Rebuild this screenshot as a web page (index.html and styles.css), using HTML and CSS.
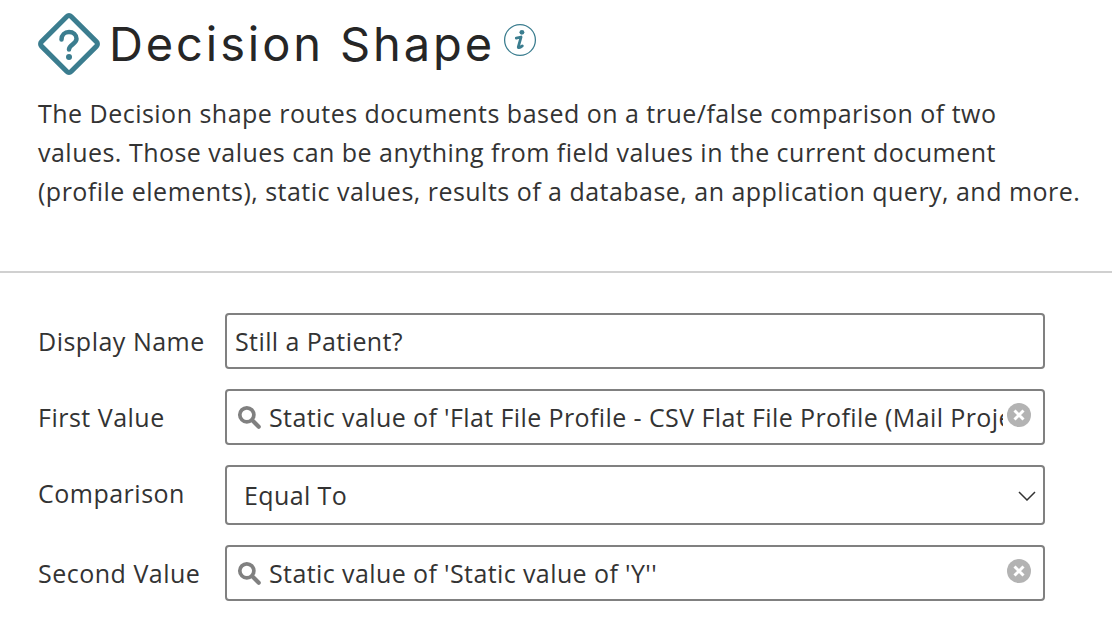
FILE: index.html
```html
<!DOCTYPE html>
<html lang="en">

<head>
    <meta charset="UTF-8">
    <meta name="viewport" content="width=device-width, initial-scale=1.0">
    <title>Decision Shape</title>
    <link rel="stylesheet" href="styles.css">
</head>

<body>
    <header class="intro">
        <div class="title-row">
            <svg class="shape-icon" width="64" height="64" viewBox="0 0 64 64" fill="none">
                <rect x="11" y="11" width="42" height="42" rx="3" transform="rotate(45 32 32)" stroke="#3b7d8f" stroke-width="5"/>
                <path d="M24.500 27.500c0-4.500 3.300-7.500 7.500-7.500s7.500 2.800 7.500 6.800c0 5.500-7.500 5.500-7.500 10.700" stroke="#3b7d8f" stroke-width="4.500" stroke-linecap="round"/>
                <circle cx="32" cy="45" r="3" fill="#3b7d8f"/>
            </svg>
            <h1>Decision Shape</h1>
            <svg class="info-icon" width="34" height="34" viewBox="0 0 32 32" fill="none">
                <circle cx="16" cy="16" r="14.500" stroke="#3b7d8f" stroke-width="1.200"/>
                <circle cx="17.800" cy="8.800" r="2.300" fill="#3b7d8f"/>
                <path d="M12.500 14.200l4.500-1-2.600 9.200c-.3 1.200 1 1.300 3.800-.9" stroke="#3b7d8f" stroke-width="2.600" stroke-linecap="round" stroke-linejoin="round"/>
            </svg>
        </div>
        <p class="summary">The Decision shape routes documents based on a true/false comparison of two values. Those values can be anything from field values in the current document (profile elements), static values, results of a database, an application query, and more.</p>
    </header>

    <form class="fields">
        <div class="field-row">
            <label>Display Name</label>
            <div class="box">
                <span class="box-text">Still a Patient?</span>
            </div>
        </div>
        <div class="field-row">
            <label>First Value</label>
            <div class="box">
                <svg class="search-icon" width="26" height="26" viewBox="0 0 24 24" fill="none">
                    <circle cx="10" cy="10" r="6.500" stroke="#808080" stroke-width="3.400"/>
                    <path d="M15 15l6 6" stroke="#808080" stroke-width="3.800" stroke-linecap="round"/>
                </svg>
                <span class="box-text">Static value of 'Flat File Profile - CSV Flat File Profile (Mail Project)'</span>
                <svg class="clear-icon" width="24" height="24" viewBox="0 0 24 24" fill="none">
                    <circle cx="12" cy="12" r="12" fill="#b3b3b3"/>
                    <path d="M7.500 7.500l9 9M16.500 7.500l-9 9" stroke="#fff" stroke-width="3"/>
                </svg>
            </div>
        </div>
        <div class="field-row select-row">
            <label>Comparison</label>
            <div class="box select-box">
                <span class="box-text">Equal To</span>
                <svg class="chevron" width="18" height="10" viewBox="0 0 18 10" fill="none">
                    <path d="M1 1l8 8 8-8" stroke="#333" stroke-width="1.500"/>
                </svg>
            </div>
        </div>
        <div class="field-row">
            <label>Second Value</label>
            <div class="box">
                <svg class="search-icon" width="26" height="26" viewBox="0 0 24 24" fill="none">
                    <circle cx="10" cy="10" r="6.500" stroke="#808080" stroke-width="3.400"/>
                    <path d="M15 15l6 6" stroke="#808080" stroke-width="3.800" stroke-linecap="round"/>
                </svg>
                <span class="box-text">Static value of 'Static value of 'Y''</span>
                <svg class="clear-icon" width="24" height="24" viewBox="0 0 24 24" fill="none">
                    <circle cx="12" cy="12" r="12" fill="#b3b3b3"/>
                    <path d="M7.500 7.500l9 9M16.500 7.500l-9 9" stroke="#fff" stroke-width="3"/>
                </svg>
            </div>
        </div>
    </form>
</body>

</html>
```

FILE: styles.css
```css
/* Page */
body {
    font-family: 'Open Sans', 'Liberation Sans', sans-serif;
    margin: 0;
    padding: 0;
    background-color: #fff;
    color: #333;
    overflow: hidden;
}

/* Title and description */
.intro {
    padding: 12px 28px 0 37px;
    height: 273px;
    box-sizing: border-box;
    border-bottom: 2px solid #d0d0d0;
}

.title-row {
    display: flex;
    align-items: center;
    height: 64px;
}

.shape-icon {
    flex: none;
}

h1 {
    margin: 0 0 0 8px;
    font-family: 'Inter', sans-serif;
    font-size: 47px;
    font-weight: 400;
    letter-spacing: 2.900px;
    line-height: 64px;
    color: #262626;
}

.info-icon {
    flex: none;
    margin: 0 0 8px 8px;
}

.summary {
    margin: 18px 0 0 1px;
    font-size: 25px;
    letter-spacing: .48px;
    line-height: 39px;
    color: #333;
}

/* Form rows */
.fields {
    display: flex;
    flex-direction: column;
    gap: 20px;
    padding: 40px 67px 0 38px;
}

.field-row {
    display: flex;
    align-items: center;
    height: 56px;
}

.select-row {
    height: 60px;
}

.select-row label {
    padding-bottom: 4px;
}

label {
    flex: none;
    width: 187px;
    font-size: 25px;
    letter-spacing: .5px;
}

.box {
    flex: 1;
    min-width: 0;
    height: 100%;
    box-sizing: border-box;
    display: flex;
    align-items: center;
    padding: 0 8px;
    border: 2px solid #808080;
    border-radius: 4px;
}

.box-text {
    flex: 1;
    min-width: 0;
    font-size: 25px;
    letter-spacing: .4px;
    white-space: nowrap;
    overflow: hidden;
}

.search-icon {
    flex: none;
    margin: 0 7px 0 1px;
}

.clear-icon {
    flex: none;
    margin: 0 4px 5px 4px;
}

.select-box {
    padding: 0 7px 0 17px;
}

.chevron {
    margin-top: 2px;
}
```
